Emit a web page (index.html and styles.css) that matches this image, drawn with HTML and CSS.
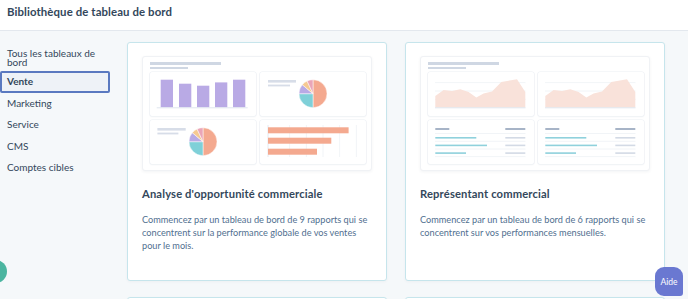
FILE: index.html
```html
<!DOCTYPE html>
<html lang="fr">
<head>
<meta charset="utf-8">
<title>Bibliothèque de tableau de bord</title>
<link rel="stylesheet" href="styles.css">
</head>
<body>
<header class="topbar"><h1 class="page-title">Bibliothèque de tableau de bord</h1></header>
<div class="layout">
  <nav class="sidebar">
    <a class="nav-item multi">Tous les tableaux de bord</a>
    <a class="nav-item active">Vente</a>
    <a class="nav-item">Marketing</a>
    <a class="nav-item">Service</a>
    <a class="nav-item">CMS</a>
    <a class="nav-item">Comptes cibles</a>
  </nav>
  <main class="content">
    <div class="card-grid">
      <section class="card">
        <div class="preview">
          <div class="pv-line1"></div>
          <div class="pv-line2"></div>
          <div class="pv-grid">
            <div class="tile">
              <svg viewBox="0 0 106 44" width="106" height="44">
                <g fill="#b9aae5">
                  <rect x="10.7" y="7.7" width="12.3" height="27.6"/>
                  <rect x="29" y="11.7" width="12.3" height="23.6"/>
                  <rect x="47" y="13.7" width="12.3" height="21.6"/>
                  <rect x="65" y="10.4" width="12.3" height="24.9"/>
                  <rect x="83" y="7.7" width="12.3" height="27.6"/>
                </g>
                <line x1="6.7" y1="35.8" x2="97.7" y2="35.8" stroke="#dfe5ee" stroke-width="1"/>
              </svg>
            </div>
            <div class="tile">
              <svg viewBox="0 0 106 44" width="106" height="44">
                <rect x="8" y="8" width="28" height="2.6" fill="#d7dde8"/>
                <rect x="8" y="12.6" width="22" height="1.8" fill="#d7dde8"/>
                <g transform="translate(53 21.7)" stroke="#fff" stroke-width="0.5">
                  <path d="M0 0 L0 -14 A14 14 0 0 1 0 14 Z" fill="#f4a98f"/>
                  <path d="M0 0 L0 14 A14 14 0 0 1 -14 0 Z" fill="#7fd0d8"/>
                  <path d="M0 0 L-14 0 A14 14 0 0 1 -10.72 -9 Z" fill="#b9aae5"/>
                  <path d="M0 0 L-10.72 -9 A14 14 0 0 1 -5.92 -12.69 Z" fill="#f6c992"/>
                  <path d="M0 0 L-5.92 -12.69 A14 14 0 0 1 0 -14 Z" fill="#eaa5b7"/>
                </g>
              </svg>
            </div>
            <div class="tile">
              <svg viewBox="0 0 106 44" width="106" height="44">
                <rect x="7.4" y="8" width="28.3" height="2.6" fill="#d7dde8"/>
                <rect x="7.4" y="12.6" width="21" height="1.8" fill="#d7dde8"/>
                <g transform="translate(53 21.7)" stroke="#fff" stroke-width="0.5">
                  <path d="M0 0 L0 -14 A14 14 0 0 1 0 14 Z" fill="#f4a98f"/>
                  <path d="M0 0 L0 14 A14 14 0 0 1 -14 0 Z" fill="#7fd0d8"/>
                  <path d="M0 0 L-14 0 A14 14 0 0 1 -10.72 -9 Z" fill="#b9aae5"/>
                  <path d="M0 0 L-10.72 -9 A14 14 0 0 1 -5.92 -12.69 Z" fill="#f6c992"/>
                  <path d="M0 0 L-5.92 -12.69 A14 14 0 0 1 0 -14 Z" fill="#eaa5b7"/>
                </g>
              </svg>
            </div>
            <div class="tile">
              <svg viewBox="0 0 106 44" width="106" height="44">
                <g stroke="#eef1f5" stroke-width="0.8">
                  <line x1="29.6" y1="5" x2="29.6" y2="37"/>
                  <line x1="46.4" y1="5" x2="46.4" y2="37"/>
                  <line x1="63" y1="5" x2="63" y2="37"/>
                  <line x1="79.6" y1="5" x2="79.6" y2="37"/>
                  <line x1="96.4" y1="5" x2="96.4" y2="37"/>
                </g>
                <line x1="8" y1="5" x2="8" y2="37" stroke="#dfe5ee" stroke-width="0.8"/>
                <g fill="#f4a98f">
                  <rect x="8" y="7.3" width="80.6" height="6"/>
                  <rect x="8" y="17.7" width="63.3" height="6"/>
                  <rect x="8" y="28.7" width="49" height="6"/>
                </g>
              </svg>
            </div>
          </div>
        </div>
        <h2 class="card-title">Analyse d'opportunité commerciale</h2>
        <p class="card-desc">Commencez par un tableau de bord de 9 rapports qui se concentrent sur la performance globale de vos ventes pour le mois.</p>
      </section>

      <section class="card">
        <div class="preview">
          <div class="pv-line1"></div>
          <div class="pv-line2"></div>
          <div class="pv-grid">
            <div class="tile">
              <svg viewBox="0 0 106 44" width="106" height="44">
                <g stroke="#eef1f5" stroke-width="0.8">
                  <line x1="7" y1="10.6" x2="97.5" y2="10.6"/>
                  <line x1="7" y1="19" x2="97.5" y2="19"/>
                  <line x1="7" y1="27.4" x2="97.5" y2="27.4"/>
                </g>
                <polygon fill="#f9e2da" points="7.3,24 15.6,18 24,19 32.3,17.3 40.6,20 48.3,25.6 55.6,21.6 64,19.6 73.3,10 89,7.3 97.3,20 97.3,35.6 7.3,35.6"/>
                <line x1="7" y1="35.8" x2="97.5" y2="35.8" stroke="#dfe5ee" stroke-width="1"/>
              </svg>
            </div>
            <div class="tile">
              <svg viewBox="0 0 106 44" width="106" height="44">
                <g stroke="#eef1f5" stroke-width="0.8">
                  <line x1="7" y1="10.6" x2="97.5" y2="10.6"/>
                  <line x1="7" y1="19" x2="97.5" y2="19"/>
                  <line x1="7" y1="27.4" x2="97.5" y2="27.4"/>
                </g>
                <polygon fill="#f9e2da" points="7.3,24 15.6,18 24,19 32.3,17.3 40.6,20 48.3,25.6 55.6,21.6 64,19.6 73.3,10 89,7.3 97.3,20 97.3,35.6 7.3,35.6"/>
                <line x1="7" y1="35.8" x2="97.5" y2="35.8" stroke="#dfe5ee" stroke-width="1"/>
              </svg>
            </div>
            <div class="tile">
              <svg viewBox="0 0 106 44" width="106" height="44">
                <rect x="7.3" y="8" width="14" height="2" fill="#a7b4c7"/>
                <rect x="77.3" y="8" width="20" height="2" fill="#a7b4c7"/>
                <g stroke="#eef1f5" stroke-width="0.8">
                  <line x1="7" y1="13.5" x2="97.5" y2="13.5"/>
                  <line x1="7" y1="21.3" x2="97.5" y2="21.3"/>
                  <line x1="7" y1="29" x2="97.5" y2="29"/>
                  <line x1="7" y1="36.6" x2="97.5" y2="36.6"/>
                </g>
                <g fill="#8fd1dc">
                  <rect x="7.3" y="17" width="41" height="1.6"/>
                  <rect x="7.3" y="24.6" width="51.7" height="1.6"/>
                  <rect x="7.3" y="32.3" width="30.7" height="1.6"/>
                </g>
                <g fill="#d3dae5">
                  <rect x="77.3" y="17" width="20" height="1.6"/>
                  <rect x="77.3" y="24.6" width="20" height="1.6"/>
                  <rect x="77.3" y="32.3" width="20" height="1.6"/>
                </g>
              </svg>
            </div>
            <div class="tile">
              <svg viewBox="0 0 106 44" width="106" height="44">
                <rect x="7.3" y="8" width="14" height="2" fill="#a7b4c7"/>
                <rect x="77.3" y="8" width="20" height="2" fill="#a7b4c7"/>
                <g stroke="#eef1f5" stroke-width="0.8">
                  <line x1="7" y1="13.5" x2="97.5" y2="13.5"/>
                  <line x1="7" y1="21.3" x2="97.5" y2="21.3"/>
                  <line x1="7" y1="29" x2="97.5" y2="29"/>
                  <line x1="7" y1="36.6" x2="97.5" y2="36.6"/>
                </g>
                <g fill="#8fd1dc">
                  <rect x="7.3" y="17" width="41" height="1.6"/>
                  <rect x="7.3" y="24.6" width="51.7" height="1.6"/>
                  <rect x="7.3" y="32.3" width="30.7" height="1.6"/>
                </g>
                <g fill="#d3dae5">
                  <rect x="77.3" y="17" width="20" height="1.6"/>
                  <rect x="77.3" y="24.6" width="20" height="1.6"/>
                  <rect x="77.3" y="32.3" width="20" height="1.6"/>
                </g>
              </svg>
            </div>
          </div>
        </div>
        <h2 class="card-title">Représentant commercial</h2>
        <p class="card-desc">Commencez par un tableau de bord de 6 rapports qui se concentrent sur vos performances mensuelles.</p>
      </section>

      <section class="card"></section>
      <section class="card"></section>
    </div>
  </main>
</div>
<button class="help-btn">Aide</button>
<div class="chat-dot"></div>
</body>
</html>
```
FILE: styles.css
```css
* { box-sizing: border-box; }
html, body { margin: 0; padding: 0; }
body {
  font-family: Lato, "Open Sans", sans-serif;
  background: #f5f8fa;
  color: #33475b;
  height: 299px;
  overflow: hidden;
}
.topbar {
  height: 31px;
  background: #fff;
  border-bottom: 1px solid #e3e8ee;
  display: flex;
  align-items: center;
  padding: 0 7px;
}
.page-title {
  margin: 0;
  font-size: 11.4px;
  font-weight: 700;
  color: #33475b;
  letter-spacing: 0.1px;
  padding-bottom: 8px;
}
.layout {
  display: flex;
}
.sidebar {
  width: 110px;
  flex: none;
  padding-top: 14px;
  display: flex;
  flex-direction: column;
}
.nav-item {
  display: flex;
  align-items: center;
  height: 21.5px;
  padding: 0 6px 0 7px;
  font-size: 10px;
  color: #33475b;
  line-height: 9px;
}
.nav-item.multi { height: 26px; }
.nav-item.active {
  background: #eef2f7;
  border: 2px solid #5a79c0;
  border-radius: 2px;
  padding-left: 5px;
  font-weight: 700;
}
.content {
  flex: 1;
  padding: 11px 0 0 17px;
}
.card-grid {
  display: grid;
  grid-template-columns: 260px 260px;
  grid-auto-rows: 239px;
  column-gap: 18px;
  row-gap: 16px;
}
.card {
  background: #fff;
  border: 1px solid #c6e5ec;
  border-radius: 3px;
  padding: 13px 13px 13px 14px;
  box-shadow: 0 1px 3px rgba(45, 62, 80, 0.04);
}
.preview {
  width: 230px;
  height: 115px;
  background: #fff;
  border: 1px solid #f0f2f5;
  border-radius: 3px;
  box-shadow: 0 1px 3px rgba(45, 62, 80, 0.06);
  padding: 5px 7px 6px 7px;
}
.pv-line1 {
  width: 71px;
  height: 3px;
  background: #cfd7e3;
}
.pv-line2 {
  width: 38px;
  height: 2px;
  margin-top: 2px;
  background: #cfd7e3;
}
.pv-grid {
  margin-top: 3px;
  display: grid;
  grid-template-columns: 106px 106px;
  grid-template-rows: 44px 44px;
  gap: 4px 3.5px;
}
.tile {
  background: #fff;
  border-radius: 2px;
  box-shadow: 0 0 0 0.6px #eceff4, 0 1px 2px rgba(45, 62, 80, 0.05);
}
.tile svg { display: block; }
.card-title {
  margin: 15px 0 0 0;
  font-size: 11.2px;
  line-height: 16px;
  font-weight: 700;
  color: #33475b;
  letter-spacing: 0.15px;
}
.card-desc {
  margin: 11px 0 0 0;
  font-size: 9.2px;
  line-height: 13px;
  color: #516f90;
}
.help-btn {
  position: fixed;
  right: 5px;
  bottom: 3px;
  width: 28px;
  height: 29px;
  border: none;
  border-radius: 9px 9px 3px 9px;
  background: #6a78d1;
  color: #fff;
  font-family: Lato, sans-serif;
  font-size: 8.5px;
  padding: 0;
}
.chat-dot {
  position: fixed;
  left: -16px;
  top: 260px;
  width: 23px;
  height: 23px;
  border-radius: 50%;
  background: #4bb5a0;
}
```
